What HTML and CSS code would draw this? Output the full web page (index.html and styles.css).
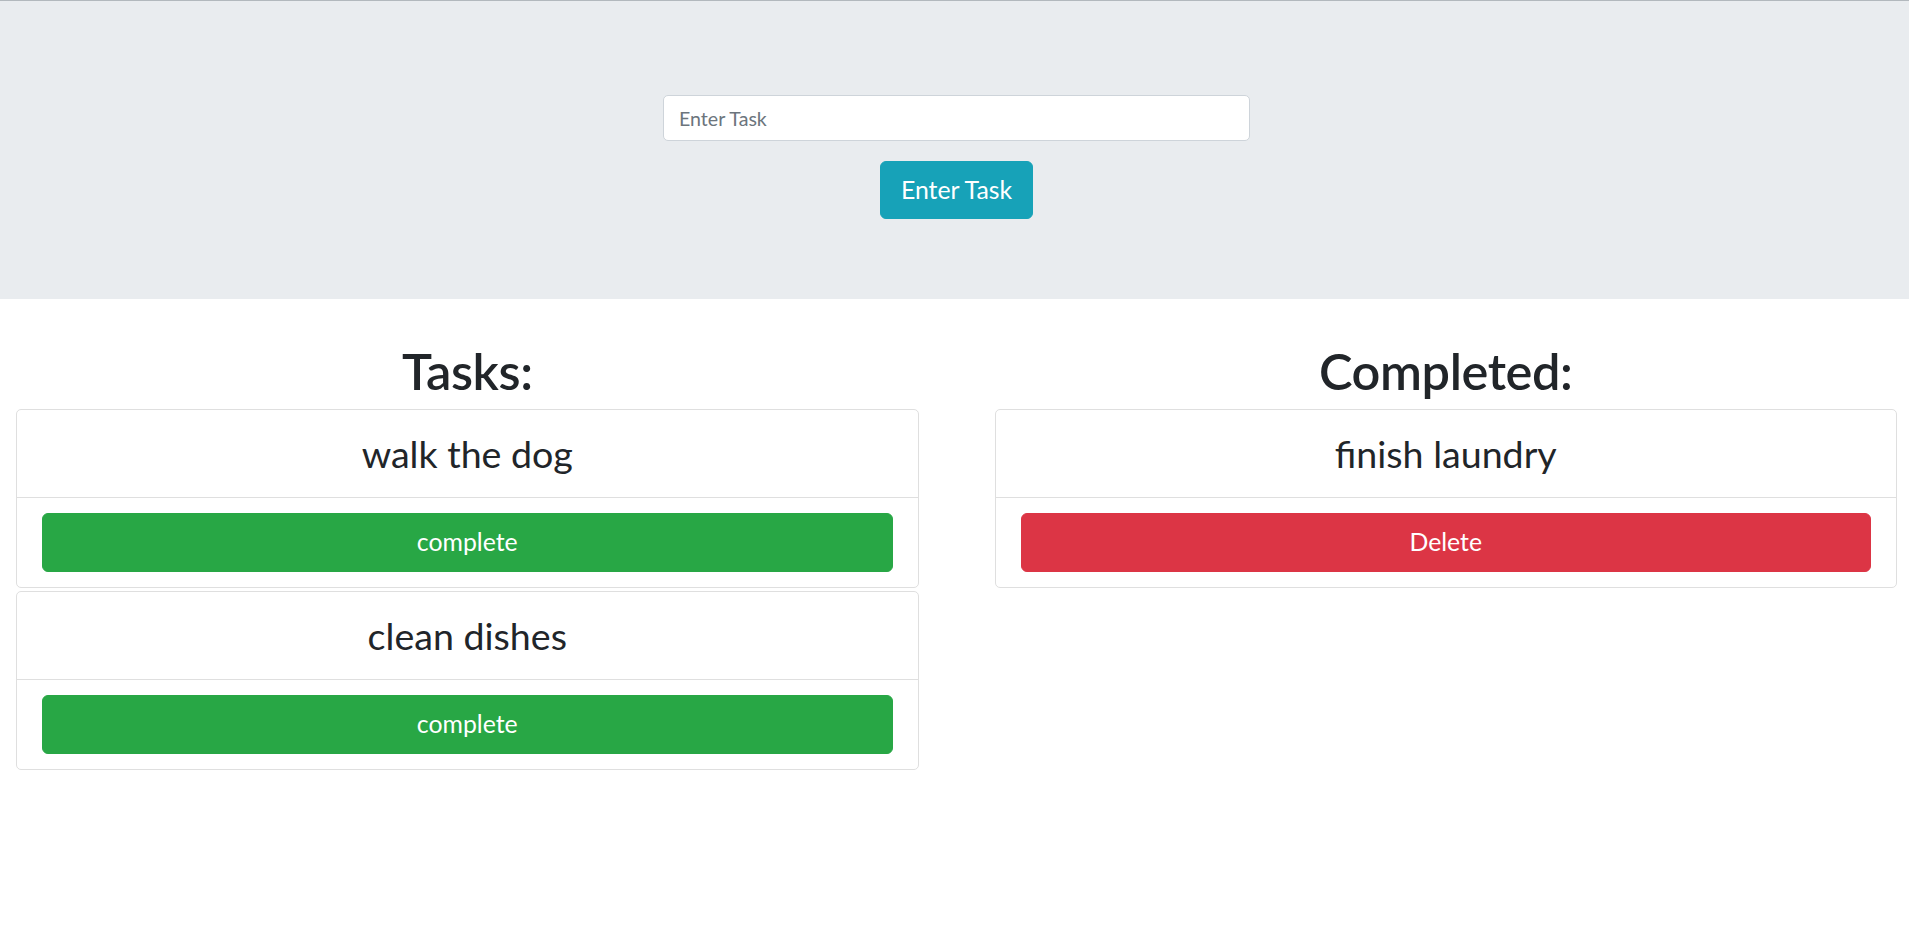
FILE: index.html
```html
<!DOCTYPE html>
<html lang="en">
<head>
<meta charset="utf-8">
<title>Tasks</title>
<link rel="stylesheet" href="styles.css">
</head>
<body>
<header class="jumbotron">
  <form class="task-form">
    <input class="task-input" type="text" placeholder="Enter Task">
    <button class="btn btn-info" type="button">Enter Task</button>
  </form>
</header>
<main class="board">
  <section class="column">
    <h1 class="column-title">Tasks:</h1>
    <div class="card">
      <div class="card-top"><h3 class="card-text">walk the dog</h3></div>
      <div class="card-bottom"><button class="btn btn-block btn-success" type="button">complete</button></div>
    </div>
    <div class="card">
      <div class="card-top"><h3 class="card-text">clean dishes</h3></div>
      <div class="card-bottom"><button class="btn btn-block btn-success" type="button">complete</button></div>
    </div>
  </section>
  <section class="column">
    <h1 class="column-title">Completed:</h1>
    <div class="card">
      <div class="card-top"><h3 class="card-text">finish laundry</h3></div>
      <div class="card-bottom"><button class="btn btn-block btn-danger" type="button">Delete</button></div>
    </div>
  </section>
</main>
</body>
</html>
```
FILE: styles.css
```css
* { box-sizing: border-box; }

html, body {
  margin: 0;
  padding: 0;
  background: #ffffff;
}

body {
  font-family: Lato, "Noto Sans", "Liberation Sans", sans-serif;
  color: #212529;
}

.jumbotron {
  background: #e9ecef;
  border-top: 1px solid #b2b8bd;
  padding: 94px 0 80px;
}

.task-form {
  display: flex;
  flex-direction: column;
  align-items: center;
  gap: 20px;
  margin: 0;
  padding-left: 4px;
}

.task-input {
  width: 587px;
  height: 46px;
  padding: 0 15px;
  font-family: inherit;
  font-size: 19.6px;
  color: #495057;
  background: #fff;
  border: 1px solid #ced4da;
  border-radius: 5px;
  outline: none;
}

.task-input::placeholder {
  color: #6c757d;
  opacity: 1;
}

.btn {
  font-family: inherit;
  font-size: 24.8px;
  line-height: 1;
  height: 58px;
  padding: 0 20px;
  border: 1px solid transparent;
  border-radius: 6px;
  color: #fff;
  cursor: pointer;
}

.btn-info {
  background: #17a2b8;
  border-color: #17a2b8;
}

.btn-success {
  background: #28a745;
  border-color: #28a745;
}

.btn-danger {
  background: #dc3545;
  border-color: #dc3545;
}

.btn-block {
  display: block;
  width: 100%;
  height: 59px;
}

.board {
  display: grid;
  grid-template-columns: 1fr 1fr;
  column-gap: 76px;
  padding: 0 12px 0 16px;
  margin-top: 41px;
}

.column {
  display: flex;
  flex-direction: column;
  gap: 3px;
}

.column-title {
  margin: 1px 0 5px;
  text-align: center;
  font-size: 50.5px;
  line-height: 60px;
  font-weight: 600;
  letter-spacing: -0.4px;
}

.card {
  border: 1px solid #dfdfdf;
  border-radius: 5px;
  background: #fff;
}

.card-top {
  padding: 23px 20px;
  border-bottom: 1px solid #dfdfdf;
}

.card-text {
  margin: 0;
  text-align: center;
  font-size: 37.6px;
  line-height: 41px;
  font-weight: 400;
}

.card-bottom {
  padding: 15px 25px 15px;
}
```
